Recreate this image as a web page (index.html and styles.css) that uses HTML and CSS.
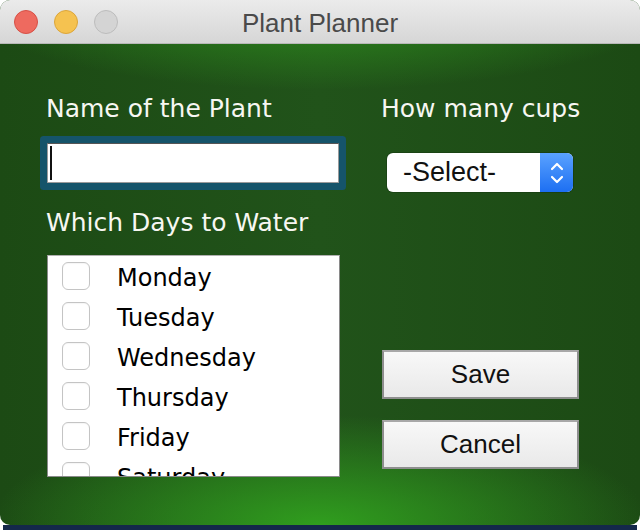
FILE: index.html
```html
<!DOCTYPE html>
<html>
<head>
<meta charset="utf-8">
<link rel="stylesheet" href="styles.css">
</head>
<body>
<div class="window">
  <div class="titlebar">
    <div class="lights">
      <span class="light red"></span>
      <span class="light yellow"></span>
      <span class="light gray"></span>
    </div>
    <div class="title">Plant Planner</div>
  </div>
  <div class="content">
    <div class="col left">
      <div class="label first">Name of the Plant</div>
      <div class="field"><span class="caret"></span></div>
      <div class="label second">Which Days to Water</div>
      <div class="list">
        <div class="row"><span class="check"></span><span class="day">Monday</span></div>
        <div class="row"><span class="check"></span><span class="day">Tuesday</span></div>
        <div class="row"><span class="check"></span><span class="day">Wednesday</span></div>
        <div class="row"><span class="check"></span><span class="day">Thursday</span></div>
        <div class="row"><span class="check"></span><span class="day">Friday</span></div>
        <div class="row"><span class="check"></span><span class="day">Saturday</span></div>
        <div class="row"><span class="check"></span><span class="day">Sunday</span></div>
      </div>
    </div>
    <div class="col right">
      <div class="label first">How many cups</div>
      <div class="select">
        <span class="select-text">-Select-</span>
        <span class="stepper">
          <svg width="16" height="28" viewBox="0 0 16 28"><path d="M3 10 L8 5 L13 10" fill="none" stroke="#fff" stroke-width="2.2" stroke-linecap="round" stroke-linejoin="round"/><path d="M3 18 L8 23 L13 18" fill="none" stroke="#fff" stroke-width="2.2" stroke-linecap="round" stroke-linejoin="round"/></svg>
        </span>
      </div>
      <div class="btn save">Save</div>
      <div class="btn cancel">Cancel</div>
    </div>
  </div>
</div>
<div class="desk"></div>
</body>
</html>
```

FILE: styles.css
```css
html, body {
  margin: 0;
  padding: 0;
  background: #ffffff;
  width: 640px;
  height: 530px;
  overflow: hidden;
}
.window {
  width: 640px;
  height: 525px;
  border-radius: 10px;
  overflow: hidden;
  display: flex;
  flex-direction: column;
  background:
    radial-gradient(ellipse 360px 90px at 50% 0%, rgba(48, 150, 30, 0.9), rgba(48, 150, 30, 0) 100%),
    radial-gradient(ellipse 330px 110px at 50% 100%, rgba(48, 158, 30, 1), rgba(48, 158, 30, 0) 100%),
    linear-gradient(to right, #1c4a14, #21531a 50%, #1c4a14);
}
.titlebar {
  height: 43px;
  flex: none;
  position: relative;
  background: linear-gradient(#ebebeb, #d6d6d6);
  border-bottom: 1px solid #b8b8b8;
  display: flex;
  align-items: center;
  justify-content: center;
}
.lights {
  position: absolute;
  left: 14px;
  top: 10px;
  display: flex;
  gap: 16px;
}
.light {
  width: 22px;
  height: 22px;
  border-radius: 50%;
  display: block;
  border: 1px solid;
}
.red { background: #ee6a5f; border-color: #d65046; }
.yellow { background: #f5c250; border-color: #dba53a; }
.gray { background: #d4d4d4; border-color: #bcbcbc; }
.title {
  font-family: "Liberation Sans", Arial, sans-serif;
  font-size: 26px;
  color: #4a4a4a;
  line-height: 30px;
  margin-top: 2px;
}
.content {
  flex: 1;
  display: flex;
  gap: 42px;
  padding-left: 47px;
}
.col {
  display: flex;
  flex-direction: column;
}
.left { width: 293px; }
.right { width: 197px; }
.label {
  font-family: "DejaVu Sans", sans-serif;
  font-size: 25px;
  line-height: 30px;
  color: #f7f7f2;
  white-space: nowrap;
}
.label.first { margin-top: 50px; margin-left: -1px; }
.field {
  margin-top: 19px;
  width: 292px;
  height: 40px;
  box-sizing: border-box;
  background: #fff;
  border: 1px solid #9a9a9a;
  border-top-color: #555;
  box-shadow: 0 0 0 7px #15546a;
  border-radius: 1px;
  display: flex;
  align-items: center;
  padding-left: 2px;
}
.caret {
  width: 2px;
  height: 34px;
  background: #111;
  display: block;
}
.label.second { margin-top: 25px; margin-left: -1px; }
.list {
  margin-top: 17px;
  width: 293px;
  height: 222px;
  box-sizing: border-box;
  background: #fff;
  border: 1px solid #8a8a8a;
  border-top-color: #b0b0b0;
  overflow: hidden;
  padding-top: 6px;
}
.row {
  height: 40px;
  display: flex;
  align-items: flex-start;
}
.check {
  flex: none;
  width: 28px;
  height: 28px;
  box-sizing: border-box;
  border: 1px solid #c4c4c4;
  border-radius: 6px;
  margin-left: 14px;
  background: #fff;
  box-shadow: inset 0 1px 1px rgba(0,0,0,0.04);
}
.day {
  font-family: "DejaVu Sans", sans-serif;
  font-size: 24px;
  line-height: 28px;
  padding-top: 2px;
  color: #000;
  margin-left: 27px;
}
.select {
  margin-top: 29px;
  margin-left: 5px;
  width: 186px;
  height: 39px;
  box-sizing: border-box;
  border-radius: 6px;
  background: #fff;
  display: flex;
  align-items: center;
  overflow: hidden;
  box-shadow: 0 0 0 1px rgba(0,0,0,0.15);
}
.select-text {
  flex: 1;
  font-family: "Liberation Sans", Arial, sans-serif;
  font-size: 27px;
  color: #111;
  padding-left: 16px;
  line-height: 39px;
}
.stepper {
  width: 33px;
  height: 39px;
  background: linear-gradient(#5aa2ff, #1d6ff2);
  display: flex;
  align-items: center;
  justify-content: center;
}
.btn {
  width: 197px;
  height: 49px;
  box-sizing: border-box;
  border: 2px solid #8e8e8e;
  border-top-color: #a8a8a8;
  background: linear-gradient(#f8f8f8, #e9e9e9);
  font-family: "Liberation Sans", Arial, sans-serif;
  font-size: 26px;
  color: #111;
  display: flex;
  align-items: center;
  justify-content: center;
}
.save { margin-top: 158px; }
.cancel { margin-top: 21px; }
.desk {
  height: 5px;
  background: #14284a;
  margin-left: 3px;
  margin-right: 3px;
}
```
